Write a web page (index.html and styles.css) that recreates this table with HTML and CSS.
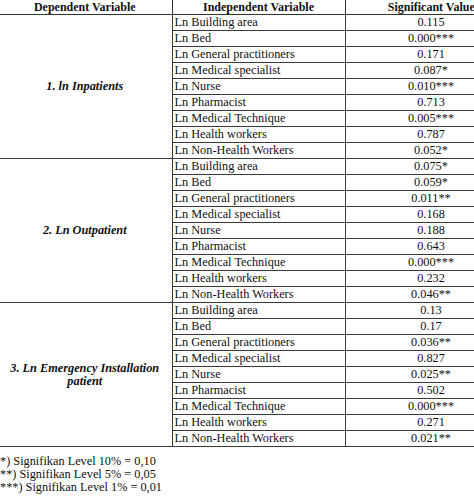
FILE: index.html
```html
<!DOCTYPE html>
<html>
<head>
<meta charset="utf-8">
<link rel="stylesheet" href="styles.css">
</head>
<body>
<div class="page">
<table class="results">
  <colgroup>
    <col class="c-dep">
    <col class="c-ind">
    <col class="c-sig">
  </colgroup>
  <thead>
    <tr><th>Dependent Variable</th><th>Independent Variable</th><th>Significant Value</th></tr>
  </thead>
  <tbody class="group">
    <tr><td class="dep" rowspan="9">1. ln Inpatients</td><td class="ind">Ln Building area</td><td class="sig">0.115</td></tr>
    <tr><td class="ind">Ln Bed</td><td class="sig">0.000***</td></tr>
    <tr><td class="ind">Ln General practitioners</td><td class="sig">0.171</td></tr>
    <tr><td class="ind">Ln Medical specialist</td><td class="sig">0.087*</td></tr>
    <tr><td class="ind">Ln Nurse</td><td class="sig">0.010***</td></tr>
    <tr><td class="ind">Ln Pharmacist</td><td class="sig">0.713</td></tr>
    <tr><td class="ind">Ln Medical Technique</td><td class="sig">0.005***</td></tr>
    <tr><td class="ind">Ln Health workers</td><td class="sig">0.787</td></tr>
    <tr><td class="ind">Ln Non-Health Workers</td><td class="sig">0.052*</td></tr>
  </tbody>
  <tbody class="group">
    <tr><td class="dep" rowspan="9">2. Ln Outpatient</td><td class="ind">Ln Building area</td><td class="sig">0.075*</td></tr>
    <tr><td class="ind">Ln Bed</td><td class="sig">0.059*</td></tr>
    <tr><td class="ind">Ln General practitioners</td><td class="sig">0.011**</td></tr>
    <tr><td class="ind">Ln Medical specialist</td><td class="sig">0.168</td></tr>
    <tr><td class="ind">Ln Nurse</td><td class="sig">0.188</td></tr>
    <tr><td class="ind">Ln Pharmacist</td><td class="sig">0.643</td></tr>
    <tr><td class="ind">Ln Medical Technique</td><td class="sig">0.000***</td></tr>
    <tr><td class="ind">Ln Health workers</td><td class="sig">0.232</td></tr>
    <tr><td class="ind">Ln Non-Health Workers</td><td class="sig">0.046**</td></tr>
  </tbody>
  <tbody class="group">
    <tr><td class="dep" rowspan="9">3. Ln Emergency Installation<br>patient</td><td class="ind">Ln Building area</td><td class="sig">0.13</td></tr>
    <tr><td class="ind">Ln Bed</td><td class="sig">0.17</td></tr>
    <tr><td class="ind">Ln General practitioners</td><td class="sig">0.036**</td></tr>
    <tr><td class="ind">Ln Medical specialist</td><td class="sig">0.827</td></tr>
    <tr><td class="ind">Ln Nurse</td><td class="sig">0.025**</td></tr>
    <tr><td class="ind">Ln Pharmacist</td><td class="sig">0.502</td></tr>
    <tr><td class="ind">Ln Medical Technique</td><td class="sig">0.000***</td></tr>
    <tr><td class="ind">Ln Health workers</td><td class="sig">0.271</td></tr>
    <tr><td class="ind">Ln Non-Health Workers</td><td class="sig">0.021**</td></tr>
  </tbody>
</table>
<div class="notes">
  <div>*) Signifikan Level 10% = 0,10</div>
  <div>**) Signifikan Level 5% = 0,05</div>
  <div>***) Signifikan Level 1% = 0,01</div>
</div>
</div>
</body>
</html>
```

FILE: styles.css
```css
html, body {
  margin: 0;
  padding: 0;
  background: #ffffff;
}

body {
  font-family: "Liberation Serif", "Times New Roman", serif;
  font-size: 12.3px;
  color: #111111;
  overflow: hidden;
}

.page {
  margin-left: -2px;
  width: 520px;
}

.results {
  border-collapse: collapse;
  table-layout: fixed;
  width: 519px;
}

.c-dep { width: 174px; }
.c-ind { width: 173px; }
.c-sig { width: 172px; }

.results th {
  height: 14px;
  padding: 0;
  font-weight: bold;
  font-size: 12px;
  line-height: 14px;
  text-align: center;
  border-bottom: 1px solid #333333;
  border-left: 1px solid #333333;
  vertical-align: middle;
}

.results th:first-child {
  border-left: none;
}

.results td {
  padding: 0;
  height: 15px;
  line-height: 15px;
  border: 1px solid #3a3a3a;
  vertical-align: middle;
  white-space: nowrap;
}

.results td.dep {
  border-left: none;
  text-align: center;
  font-weight: bold;
  font-style: italic;
  line-height: 13px;
}

.results td.ind {
  text-align: left;
  padding-left: 2px;
}

.results td.sig {
  text-align: center;
}

.group {
  border-bottom: 1.5px solid #333333;
}

.notes {
  margin-top: 8px;
  padding-left: 2px;
  line-height: 13px;
}
```
